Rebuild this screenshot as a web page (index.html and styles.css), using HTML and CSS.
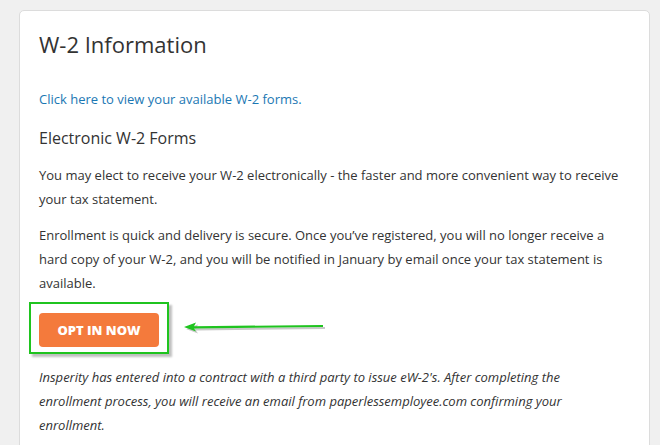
FILE: index.html
```html
<!DOCTYPE html>
<html>
  <head>
    <title>W-2 Information</title>
    <meta charset="UTF-8">
    <link rel="stylesheet" href="styles.css">
  </head>

  <body>
    <section class="card">
      <h1>W-2 Information</h1>
      <a class="forms-link" href="#">Click here to view your available W-2 forms.</a>

      <h2>Electronic W-2 Forms</h2>
      <p>You may elect to receive your W-2 electronically - the faster and more convenient way to receive your tax statement.</p>
      <p>Enrollment is quick and delivery is secure. Once you&rsquo;ve registered, you will no longer receive a hard copy of your W-2, and you will be notified in January by email once your tax statement is available.</p>

      <div class="opt-row">
        <div class="highlight">
          <button class="btn-opt">Opt in now</button>
        </div>
        <!-- annotation arrow -->
        <svg class="arrow" width="150" height="14" viewBox="0 0 150 14">
          <g fill="#c8c8c8" transform="translate(2 2)">
            <path d="M1 6 L13 1.5 L11 5.2 L140 4 L140 6 L11 7.4 L13 10.5 Z"/>
          </g>
          <path d="M1 6 L13 1.5 L11 5.2 L140 4 L140 6 L11 7.4 L13 10.5 Z" fill="#1fc41f"/>
        </svg>
      </div>

      <p class="note">Insperity has entered into a contract with a third party to issue eW-2's. After completing the enrollment process, you will receive an email from paperlessemployee.com confirming your enrollment.</p>
    </section>
  </body>

</html>
```

FILE: styles.css
```css
html * {
  box-sizing: border-box;
}

body {
  margin: 0;
  background: #f0f0f0;
  font-family: 'Open Sans', sans-serif;
  font-size: 13px;
  line-height: 24px;
  color: #333;
}

.card {
  margin: 10px 10px 0 19px;
  padding: 19px 19px 40px 19px;
  background: #fff;
  border: 1px solid #dcdcdc;
  border-radius: 5px;
  min-height: 460px;
}

h1 {
  margin: 0;
  font-size: 22px;
  font-weight: normal;
  line-height: 29px;
  color: #333;
}

.forms-link {
  display: block;
  margin-top: 28px;
  color: #1b77b3;
  text-decoration: none;
}

h2 {
  margin: 15px 0 0;
  font-size: 16px;
  font-weight: normal;
  line-height: 24px;
  color: #333;
}

p {
  margin: 12px 0 0;
}

h2 + p {
  margin-top: 13px;
}

.opt-row {
  display: flex;
  align-items: center;
  margin: 7px 0 0 -10px;
}

.highlight {
  padding: 9px 8px 5px 8px;
  border: 2px solid #1fc41f;
  box-shadow: 3px 3px 2px rgba(0, 0, 0, 0.25);
}

.btn-opt {
  display: block;
  width: 120px;
  height: 34px;
  border: none;
  border-radius: 4px;
  background: #f47a3c;
  color: #fff;
  font-family: 'Open Sans', sans-serif;
  font-size: 13px;
  font-weight: 800;
  text-transform: uppercase;
  cursor: pointer;
}

.arrow {
  margin-left: 14px;
}

.note {
  margin-top: 11px;
  max-width: 560px;
  font-style: italic;
}
```
